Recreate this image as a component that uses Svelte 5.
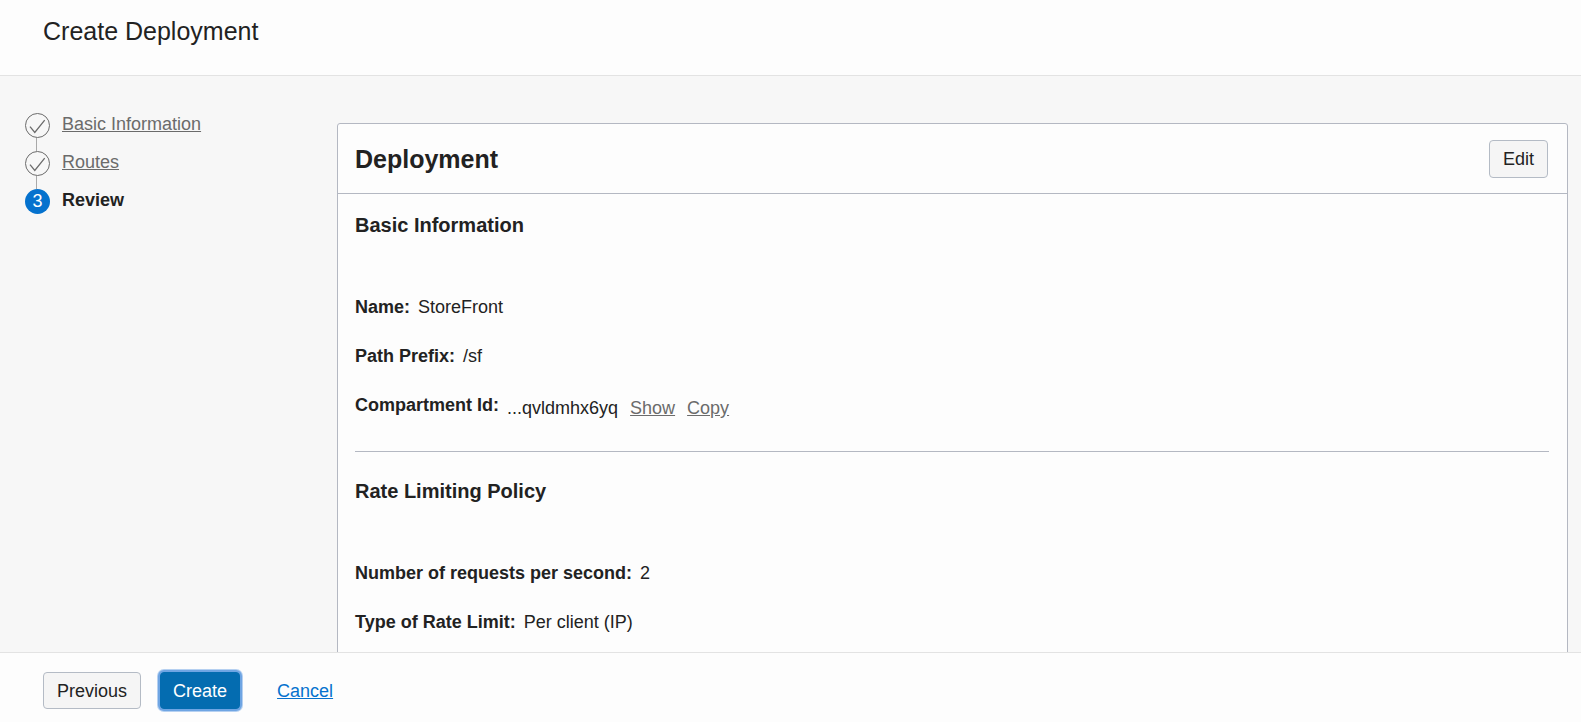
<script>
  const steps = [
    { label: 'Basic Information', done: true },
    { label: 'Routes', done: true },
    { label: 'Review', done: false }
  ];
  const sections = [
    {
      title: 'Basic Information',
      rows: [
        { label: 'Name:', value: 'StoreFront' },
        { label: 'Path Prefix:', value: '/sf' },
        { label: 'Compartment Id:', value: '...qvldmhx6yq', actions: ['Show', 'Copy'] }
      ]
    },
    {
      title: 'Rate Limiting Policy',
      rows: [
        { label: 'Number of requests per second:', value: '2' },
        { label: 'Type of Rate Limit:', value: 'Per client (IP)' }
      ]
    }
  ];
</script>

<div class="page">
  <header class="top"><h1>Create Deployment</h1></header>

  <div class="body">
    <nav aria-label="Progress">
      <ol class="steps">
        {#each steps as step, i}
          <li>
            {#if step.done}
              <svg class="mark" viewBox="0 0 25 25" aria-hidden="true">
                <circle cx="12.5" cy="12.5" r="12" />
                <path d="M5 13.7 L9.8 19.4 L19.7 7.2" />
              </svg>
              <a href="#step-{i + 1}">{step.label}</a>
            {:else}
              <span class="mark current">{i + 1}</span>
              <strong aria-current="step">{step.label}</strong>
            {/if}
          </li>
        {/each}
      </ol>
    </nav>

    <main class="card">
      <div class="card-head">
        <h2>Deployment</h2>
        <button type="button" class="btn">Edit</button>
      </div>
      {#each sections as section}
        <section>
          <h3>{section.title}</h3>
          <dl>
            {#each section.rows as row}
              <div class="row">
                <dt>{row.label}</dt>
                <dd class:masked={row.actions}>
                  <span>{row.value}</span>
                  {#if row.actions}
                    {#each row.actions as action}
                      <a href="#{action.toLowerCase()}">{action}</a>
                    {/each}
                  {/if}
                </dd>
              </div>
            {/each}
          </dl>
        </section>
      {/each}
    </main>
  </div>

  <footer>
    <button type="button" class="btn">Previous</button>
    <button type="button" class="btn primary">Create</button>
    <a class="cancel" href="#cancel">Cancel</a>
  </footer>
</div>

<style>
  :global(body) {
    margin: 0;
  }
  .page {
    box-sizing: border-box;
    display: flex;
    flex-direction: column;
    height: 100vh;
    font: 18px/24px "Liberation Sans", Arial, sans-serif;
    color: #222;
    background: #f7f7f7;
  }
  h1, h2, h3, ol, dl, dd {
    margin: 0;
    padding: 0;
  }
  .top {
    padding: 15px 43px 28px;
    background: #fdfdfd;
    border-bottom: 1px solid #e3e3e3;
  }
  h1, h2 {
    font-size: 25px;
    line-height: 32px;
  }
  h1 {
    font-weight: 400;
  }
  .body {
    flex: 1;
    min-height: 0;
    overflow: hidden;
    display: flex;
    align-items: flex-start;
    padding: 0 13px 0 25px;
  }
  nav {
    flex: none;
    width: 312px;
    padding-top: 37px;
  }
  .steps {
    list-style: none;
    display: flex;
    flex-direction: column;
    gap: 13px;
  }
  .steps li {
    position: relative;
    display: flex;
    align-items: flex-start;
    gap: 12px;
    height: 25px;
  }
  .steps li + li::before {
    content: "";
    position: absolute;
    left: 11px;
    top: -13px;
    width: 1px;
    height: 13px;
    background: #a9a9a9;
  }
  .steps a, .steps strong {
    line-height: 23px;
  }
  .mark {
    flex: none;
    width: 25px;
    height: 25px;
  }
  .mark circle, .mark path {
    fill: none;
    stroke: #6b6b6b;
  }
  .mark path {
    stroke-width: 1.3;
  }
  .current {
    border-radius: 50%;
    background: #0572ce;
    color: #fff;
    text-align: center;
    line-height: 25px;
  }
  a {
    color: #6b6b6b;
    text-decoration: underline;
  }
  .card {
    flex: 1;
    min-width: 0;
    margin-top: 47px;
    background: #fdfdfd;
    border: 1px solid #b4b8c2;
    border-radius: 3px;
    padding-bottom: 40px;
  }
  .card-head {
    display: flex;
    align-items: center;
    justify-content: space-between;
    padding: 16px 19px 15px 17px;
    border-bottom: 1px solid #b4b8c2;
  }
  .btn {
    box-sizing: border-box;
    height: 38px;
    padding: 0 13px;
    font: inherit;
    color: #222;
    background: #f5f5f5;
    border: 1px solid #b4bbc5;
    border-radius: 4px;
  }
  section {
    margin: 0 18px 0 17px;
    padding: 19px 0 34px;
  }
  section + section {
    border-top: 1px solid #b4b8c2;
    padding-top: 27px;
  }
  h3 {
    font-size: 20px;
    line-height: 24px;
  }
  dl {
    display: flex;
    flex-direction: column;
    gap: 25px;
    margin-top: 58px;
  }
  .row {
    display: flex;
    gap: 8px;
    height: 24px;
  }
  dt {
    font-weight: 700;
  }
  .masked {
    display: flex;
    gap: 12px;
    padding-top: 3px;
  }
  footer {
    flex: none;
    display: flex;
    align-items: center;
    gap: 19px;
    padding: 19px 43px 13px;
    background: #fdfdfd;
    border-top: 1px solid #e3e3e3;
  }
  footer .btn {
    height: 37px;
  }
  .btn.primary {
    padding: 0 12px;
    color: #fff;
    background: #046cb0;
    border-color: #046cb0;
    box-shadow: 0 0 0 2px #6fa5e3, 0 0 0 3px #b5d0f1;
  }
  .cancel {
    margin-left: 18px;
    color: #0572ce;
  }
</style>
